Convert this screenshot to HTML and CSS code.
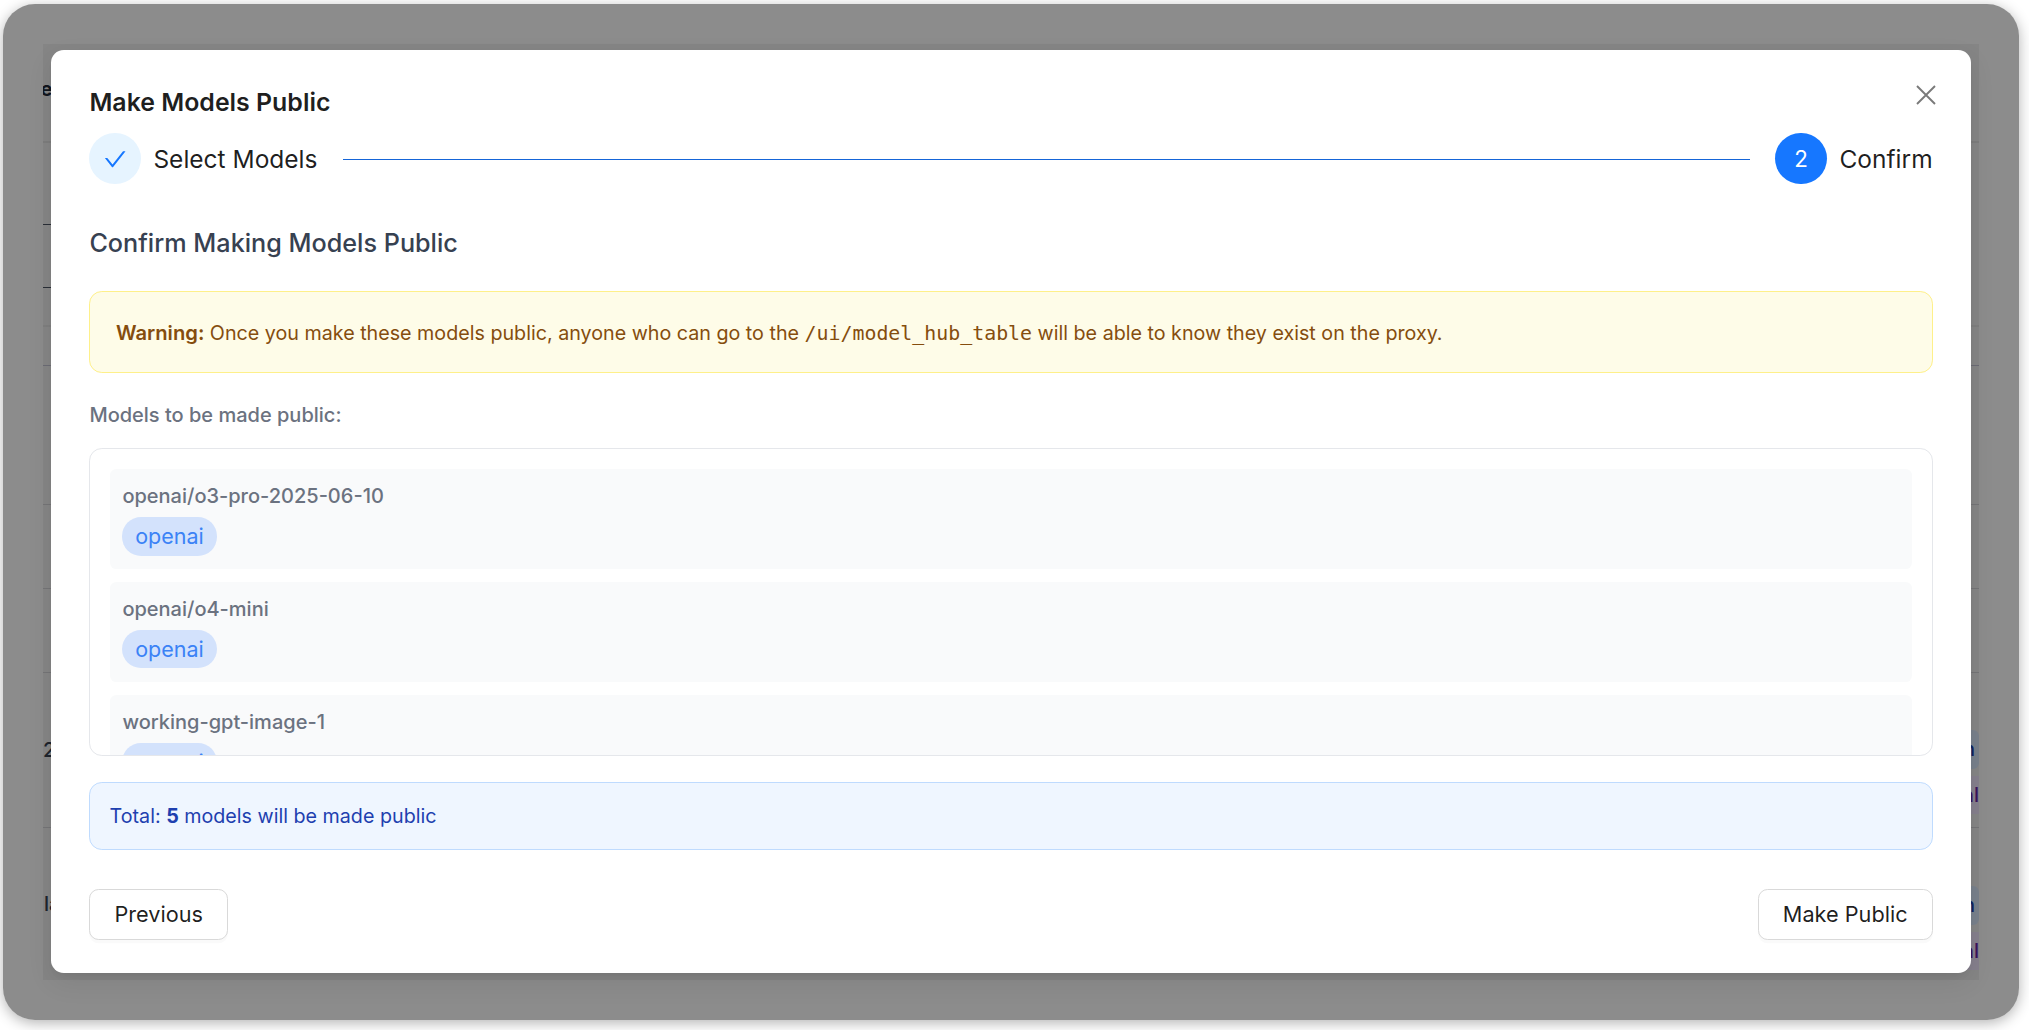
FILE: index.html
```html
<!DOCTYPE html>
<html lang="en">
<head>
<meta charset="utf-8">
<title>Make Models Public</title>
<link rel="stylesheet" href="styles.css">
</head>
<body>
<div class="window">
  <div class="panel">
    <div class="row row-head"><span class="cell-text cell-head">Model</span></div>
    <div class="row row-a"><span class="stub"></span></div>
    <div class="row row-b"><span class="stub"></span></div>
    <div class="row row-c line-band"></div>
    <div class="row row-c line-purple"></div>
    <div class="row row-e line-thin"></div>
    <div class="row row-f line-thin"></div>
    <div class="row row-f line-thin"></div>
    <div class="row row-g line-thin">
      <span class="cell-text cell-num">2025</span>
      <div class="chips chips-g"><span class="chip chip-blue">Vision</span><span class="chip chip-purple">Modal</span></div>
    </div>
    <div class="row row-h">
      <span class="cell-text cell-la">latest</span>
      <div class="chips chips-h"><span class="chip chip-blue">Vision</span><span class="chip chip-purple">Modal</span></div>
    </div>
  </div>
  <div class="overlay"></div>
  <div class="modal">
    <button class="close" aria-label="Close">
      <svg width="20" height="20" viewBox="0 0 20 20"><path d="M1 1L19 19M19 1L1 19" fill="none" stroke="#7a7a7a" stroke-width="1.9"/></svg>
    </button>
    <h2 class="title">Make Models Public</h2>
    <div class="steps">
      <div class="step">
        <span class="dot dot-done">
          <svg width="22.4" height="22.4" viewBox="64 64 896 896"><path fill="#1677ff" d="M912 190h-69.9c-9.8 0-19.1 4.5-25.1 12.2L404.7 724.5 207 474a32 32 0 0 0-25.1-12.2H112c-6.7 0-10.4 7.7-6.3 12.9l273.9 347c12.8 16.2 37.4 16.2 50.3 0l488.4-618.9c4.1-5.1.4-12.8-6.3-12.8z"/></svg>
        </span>
        <span class="step-label">Select Models</span>
      </div>
      <div class="step-line"></div>
      <div class="step">
        <span class="dot dot-active">2</span>
        <span class="step-label">Confirm</span>
      </div>
    </div>
    <h3 class="subtitle">Confirm Making Models Public</h3>
    <div class="warning"><strong>Warning:</strong> Once you make these models public, anyone who can go to the <code class="mono">/ui/model_hub_table</code> will be able to know they exist on the proxy.</div>
    <div class="list-label">Models to be made public:</div>
    <div class="list">
      <div class="item"><div class="item-name">openai/o3-pro-2025-06-10</div><span class="badge">openai</span></div>
      <div class="item"><div class="item-name">openai/o4-mini</div><span class="badge">openai</span></div>
      <div class="item"><div class="item-name">working-gpt-image-1</div><span class="badge">openai</span></div>
    </div>
    <div class="total">Total: <strong>5</strong> models will be made public</div>
    <div class="footer">
      <button class="btn">Previous</button>
      <button class="btn">Make Public</button>
    </div>
  </div>
</div>
</body>
</html>
```
FILE: styles.css
```css
* { box-sizing: border-box; }
html, body { margin: 0; height: 100%; background: #fff; overflow: hidden; }
body { font-family: Inter, "Noto Sans", sans-serif; padding: 4px 10px 10px 3px; }

.window {
  position: relative;
  height: 1016px;
  background: #fff;
  border-radius: 32px;
  box-shadow: 0 3px 14px rgba(0, 0, 0, .3);
  padding: 40px;
  overflow: hidden;
}
.panel {
  display: flex;
  flex-direction: column;
  height: 936px;
  background: #f3f3f3;
  overflow: hidden;
}
.row { display: flex; justify-content: space-between; align-items: center; flex: none; }
.row-head { height: 99px; padding-bottom: 7px; border-bottom: 2px solid #e2e2e2; }
.row-a { height: 82px; align-items: flex-end; }
.row-b { height: 63px; align-items: flex-end; }
.row-c { height: 39px; }
.row-e { height: 139px; }
.row-f { height: 84px; }
.row-g { height: 155px; }
.row-h { height: 152px; }
.line-band { border-bottom: 2px solid #e5e5e5; }
.line-purple { border-bottom: 1px solid #c4c4d4; }
.line-thin { border-bottom: 1px solid #d4d4d8; }
.stub { display: block; width: 100px; border-bottom: 1px solid #4b5563; }
.cell-text { font-size: 20px; color: #374151; white-space: nowrap; }
.cell-head { font-weight: 700; margin-left: -46px; color: #1f2937; }
.cell-num { font-weight: 500; }
.cell-la { margin-left: 1px; font-weight: 500; }
.chips { display: flex; flex-direction: column; align-items: flex-end; gap: 7px; align-self: flex-end; }
.chips-g { margin-bottom: 13px; }
.chips-h { margin-bottom: 10px; }
.chip { font-size: 20px; font-weight: 500; height: 38.4px; line-height: 38.4px; white-space: nowrap; }
.chip-blue { background: #dbeafe; color: #1e40af; padding: 0 4px 0 12px; border-radius: 6px; }
.chip-purple { background: #f3e8ff; color: #6b21a8; padding: 0 0 0 12px; }

.overlay {
  position: absolute;
  inset: 0;
  background: rgba(0, 0, 0, .45);
}
.modal {
  position: absolute;
  left: 48px;
  top: 46px;
  width: 1920px;
  padding: 33px 38.4px 32.8px;
  background: #fff;
  border-radius: 12.8px;
  box-shadow: 0 9.6px 25.6px rgba(0, 0, 0, .08), 0 4.8px 9.6px -6.4px rgba(0, 0, 0, .12);
}
.close {
  position: absolute;
  top: 35px;
  right: 35px;
  width: 20px;
  height: 20px;
  padding: 0;
  border: 0;
  background: none;
  display: block;
}
.close svg { display: block; }
.title {
  margin: 0 0 11.8px;
  font-size: 24.9px;
  line-height: 38.4px;
  font-weight: 600;
  color: rgba(0, 0, 0, .88);
}
.steps { display: flex; align-items: center; height: 51.2px; }
.step { display: flex; align-items: center; gap: 12.8px; flex: none; }
.dot {
  width: 51.2px;
  height: 51.2px;
  border-radius: 50%;
  display: flex;
  align-items: center;
  justify-content: center;
  font-size: 22.4px;
}
.dot-done { background: #e6f4ff; }
.dot-active { background: #1677ff; color: #fff; }
.step-label { font-size: 24.5px; color: rgba(0, 0, 0, .88); }
.step-line { flex: 1; height: 1px; margin: 1.5px 25.6px 0; background: #1565d8; }
.subtitle {
  margin: 36.4px 0 25.6px;
  font-size: 25.2px;
  line-height: 44.8px;
  font-weight: 500;
  color: #374151;
}
.warning {
  padding: 26.6px 25.6px 0;
  height: 82px;
  line-height: 27.6px;
  font-size: 19.7px;
  color: #854d0e;
  background: #fefce8;
  border: 1.6px solid #fef08a;
  border-radius: 12.8px;
}
.warning strong { font-weight: 600; font-size: 20.2px; }
.mono { font-family: "DejaVu Sans Mono", "Liberation Mono", monospace; font-size: 19.9px; }
.list-label {
  margin: 26px 0 17px;
  font-size: 20px;
  line-height: 32px;
  font-weight: 500;
  color: #6b7280;
}
.list {
  height: 308px;
  padding: 20px 19.2px 0;
  border: 1.6px solid #e5e7eb;
  border-radius: 12.8px;
  overflow: hidden;
  display: flex;
  flex-direction: column;
  gap: 12.8px;
}
.item {
  flex: none;
  height: 100px;
  padding: 13px 12.8px;
  background: #f9fafb;
  border-radius: 6.4px;
}
.item-name {
  font-size: 20px;
  line-height: 28px;
  font-weight: 500;
  color: #6b7280;
  margin-bottom: 7px;
}
.badge {
  display: inline-block;
  height: 38.4px;
  line-height: 38.4px;
  padding: 0 12.8px;
  border-radius: 19.2px;
  font-size: 21.5px;
  color: #3b82f6;
  background: #d3e2fc;
}
.total {
  margin-top: 25.6px;
  padding: 17px 19.2px;
  font-size: 19.7px;
  line-height: 32px;
  color: #1e40af;
  background: #eff6ff;
  border: 1.6px solid #bfdbfe;
  border-radius: 12.8px;
}
.total strong { font-weight: 700; }
.footer { display: flex; justify-content: space-between; margin-top: 38.8px; }
.btn {
  height: 51.2px;
  padding: 0 24px;
  font-family: inherit;
  font-size: 21.7px;
  color: rgba(0, 0, 0, .88);
  background: #fff;
  border: 1.6px solid #d9d9d9;
  border-radius: 9.6px;
  box-shadow: 0 3.2px 0 rgba(0, 0, 0, .02);
}
```
